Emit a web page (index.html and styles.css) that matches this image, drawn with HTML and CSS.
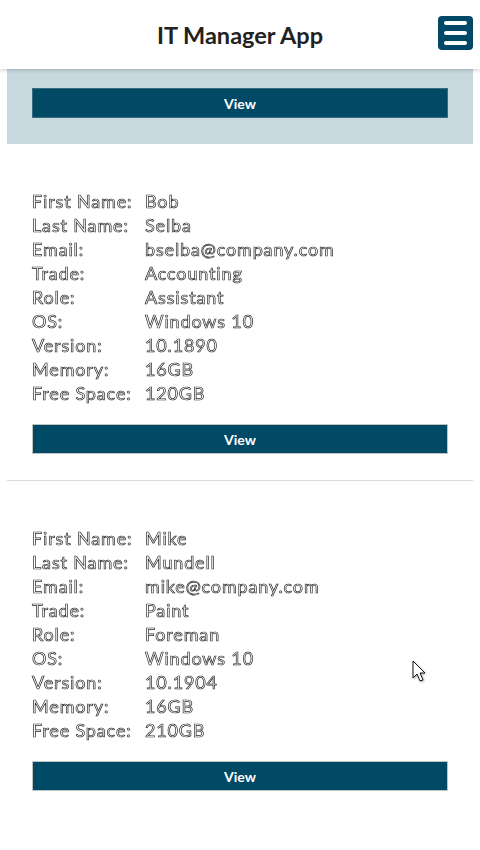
FILE: index.html
```html
<!DOCTYPE html>
<html>
<head>
<meta charset="utf-8">
<link rel="stylesheet" href="styles.css">
</head>
<body>
<header class="topbar">
  <h1 class="title">IT Manager App</h1>
  <button class="menu-btn" aria-label="Menu">
    <span class="bar"></span><span class="bar"></span><span class="bar"></span>
  </button>
</header>
<main class="list">
  <section class="card selected">
    <button class="view-btn">View</button>
  </section>
  <section class="card">
    <div class="fields">
      <div class="row"><span class="label">First Name:</span><span class="value">Bob</span></div>
      <div class="row"><span class="label">Last Name:</span><span class="value">Selba</span></div>
      <div class="row"><span class="label">Email:</span><span class="value">bselba@company.com</span></div>
      <div class="row"><span class="label">Trade:</span><span class="value">Accounting</span></div>
      <div class="row"><span class="label">Role:</span><span class="value">Assistant</span></div>
      <div class="row"><span class="label">OS:</span><span class="value">Windows 10</span></div>
      <div class="row"><span class="label">Version:</span><span class="value">10.1890</span></div>
      <div class="row"><span class="label">Memory:</span><span class="value">16GB</span></div>
      <div class="row"><span class="label">Free Space:</span><span class="value">120GB</span></div>
    </div>
    <button class="view-btn">View</button>
  </section>
  <section class="card last">
    <div class="fields">
      <div class="row"><span class="label">First Name:</span><span class="value">Mike</span></div>
      <div class="row"><span class="label">Last Name:</span><span class="value">Mundell</span></div>
      <div class="row"><span class="label">Email:</span><span class="value">mike@company.com</span></div>
      <div class="row"><span class="label">Trade:</span><span class="value">Paint</span></div>
      <div class="row"><span class="label">Role:</span><span class="value">Foreman</span></div>
      <div class="row"><span class="label">OS:</span><span class="value">Windows 10</span></div>
      <div class="row"><span class="label">Version:</span><span class="value">10.1904</span></div>
      <div class="row"><span class="label">Memory:</span><span class="value">16GB</span></div>
      <div class="row"><span class="label">Free Space:</span><span class="value">210GB</span></div>
    </div>
    <button class="view-btn">View</button>
  </section>
</main>
<svg class="cursor" width="16" height="24" viewBox="0 0 16 24">
  <path d="M1 1 L1 18 L5 14 L8 21 L11 20 L8 13 L13 13 Z" fill="#fff" stroke="#111" stroke-width="1"/>
</svg>
</body>
</html>
```
FILE: styles.css
```css
* { box-sizing: border-box; }
html, body { margin: 0; padding: 0; background: #fff; }
body {
  font-family: Lato, "Liberation Sans", sans-serif;
  width: 480px;
  height: 850px;
  overflow: hidden;
  position: relative;
}
.topbar {
  height: 69px;
  display: flex;
  align-items: center;
  justify-content: center;
  position: relative;
  background: #fff;
  box-shadow: 0 1px 4px rgba(0,0,0,0.22);
  z-index: 2;
}
.title {
  margin: 0;
  font-size: 23.5px;
  font-weight: 700;
  color: #222;
}
.menu-btn {
  position: absolute;
  right: 7px;
  top: 16px;
  width: 35px;
  height: 34px;
  border: none;
  border-radius: 4px;
  background: #004866;
  padding: 0;
  display: flex;
  flex-direction: column;
  align-items: center;
  justify-content: center;
  gap: 6px;
}
.bar {
  display: block;
  width: 23px;
  height: 4px;
  border-radius: 2px;
  background: #fff;
}
.list {
  padding: 0 7px;
}
.card {
  padding: 45px 25px 26px;
  border-bottom: 1px solid #dcdcdc;
}
.card.selected {
  background: #c8d8df;
  padding-top: 19px;
  border-bottom: none;
}
.card.last { border-bottom: none; }
.fields {
  display: flex;
  flex-direction: column;
  margin-bottom: 19px;
  will-change: transform;
}
.row {
  display: flex;
  height: 24px;
  align-items: center;
  font-size: 18px;
  letter-spacing: 0.85px;
  color: #fff;
  -webkit-text-stroke: 0.7px #2a2a2a;
}
.label { width: 113px; flex: none; }
.value { flex: 1; }
.view-btn {
  display: block;
  width: 100%;
  height: 30px;
  background: #004a66;
  border: 1px solid #c2c2c2;
  color: #fff;
  font-family: Lato, "Liberation Sans", sans-serif;
  font-weight: 700;
  font-size: 14px;
  padding: 0;
}
.card.selected .view-btn { border-color: #3a6a80; }
.cursor {
  position: absolute;
  left: 412px;
  top: 660px;
  filter: drop-shadow(1px 1px 1px rgba(0,0,0,0.3));
}
```
